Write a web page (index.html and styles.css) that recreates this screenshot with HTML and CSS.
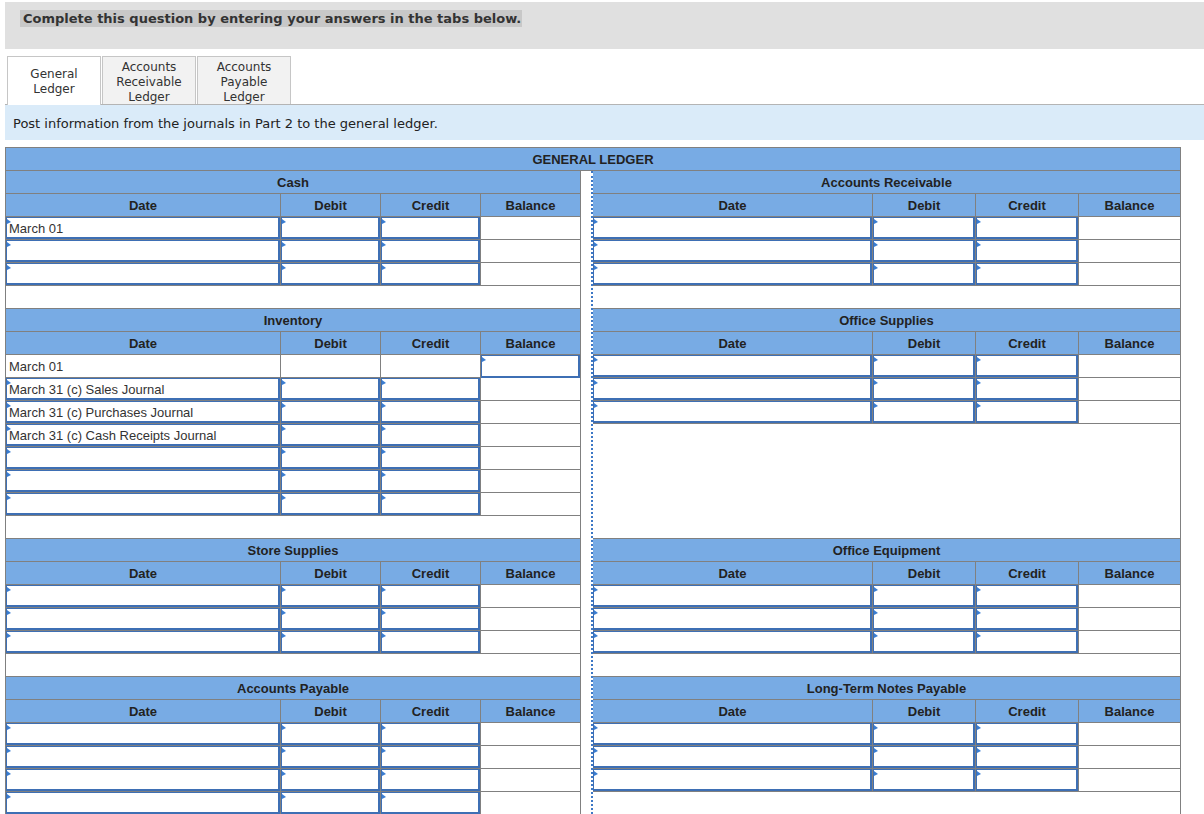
FILE: index.html
```html
<!DOCTYPE html>
<html>
<head>
<meta charset="utf-8">
<title>General Ledger</title>
<link rel="stylesheet" href="styles.css">
</head>
<body>
<div class="page">
  <div class="topbar"><span class="prompt">Complete this question by entering your answers in the tabs below.</span></div>
  <div class="tabs">
    <div class="tab active">General<br>Ledger</div>
    <div class="tab">Accounts<br>Receivable<br>Ledger</div>
    <div class="tab">Accounts<br>Payable<br>Ledger</div>
  </div>
  <div class="instr">Post information from the journals in Part 2 to the general ledger.</div>

  <div class="gl">
    <div class="gl-head">GENERAL LEDGER</div>
    <div class="gl-body">
      <div class="sep"></div>

      <!-- Cash -->
      <div class="block left r1">
        <div class="title">Cash</div>
        <div class="row hd"><div class="c">Date</div><div class="c">Debit</div><div class="c">Credit</div><div class="c">Balance</div></div>
        <div class="row"><div class="c"><div class="inp"><i class="flag"></i>March 01</div></div><div class="c"><div class="inp"><i class="flag"></i></div></div><div class="c"><div class="inp"><i class="flag"></i></div></div><div class="c"></div></div>
        <div class="row"><div class="c"><div class="inp"><i class="flag"></i></div></div><div class="c"><div class="inp"><i class="flag"></i></div></div><div class="c"><div class="inp"><i class="flag"></i></div></div><div class="c"></div></div>
        <div class="row"><div class="c"><div class="inp"><i class="flag"></i></div></div><div class="c"><div class="inp"><i class="flag"></i></div></div><div class="c"><div class="inp"><i class="flag"></i></div></div><div class="c"></div></div>
        <div class="spacer"></div>
      </div>

      <!-- Accounts Receivable -->
      <div class="block right r1">
        <div class="title">Accounts Receivable</div>
        <div class="row hd"><div class="c">Date</div><div class="c">Debit</div><div class="c">Credit</div><div class="c">Balance</div></div>
        <div class="row"><div class="c"><div class="inp"><i class="flag"></i></div></div><div class="c"><div class="inp"><i class="flag"></i></div></div><div class="c"><div class="inp"><i class="flag"></i></div></div><div class="c"></div></div>
        <div class="row"><div class="c"><div class="inp"><i class="flag"></i></div></div><div class="c"><div class="inp"><i class="flag"></i></div></div><div class="c"><div class="inp"><i class="flag"></i></div></div><div class="c"></div></div>
        <div class="row"><div class="c"><div class="inp"><i class="flag"></i></div></div><div class="c"><div class="inp"><i class="flag"></i></div></div><div class="c"><div class="inp"><i class="flag"></i></div></div><div class="c"></div></div>
        <div class="spacer"></div>
      </div>

      <!-- Inventory -->
      <div class="block left r2">
        <div class="title">Inventory</div>
        <div class="row hd"><div class="c">Date</div><div class="c">Debit</div><div class="c">Credit</div><div class="c">Balance</div></div>
        <div class="row"><div class="c txt">March 01</div><div class="c"></div><div class="c"></div><div class="c"><div class="inp"><i class="flag"></i></div></div></div>
        <div class="row"><div class="c"><div class="inp"><i class="flag"></i>March 31 (c) Sales Journal</div></div><div class="c"><div class="inp"><i class="flag"></i></div></div><div class="c"><div class="inp"><i class="flag"></i></div></div><div class="c"></div></div>
        <div class="row"><div class="c"><div class="inp"><i class="flag"></i>March 31 (c) Purchases Journal</div></div><div class="c"><div class="inp"><i class="flag"></i></div></div><div class="c"><div class="inp"><i class="flag"></i></div></div><div class="c"></div></div>
        <div class="row"><div class="c"><div class="inp"><i class="flag"></i>March 31 (c) Cash Receipts Journal</div></div><div class="c"><div class="inp"><i class="flag"></i></div></div><div class="c"><div class="inp"><i class="flag"></i></div></div><div class="c"></div></div>
        <div class="row"><div class="c"><div class="inp"><i class="flag"></i></div></div><div class="c"><div class="inp"><i class="flag"></i></div></div><div class="c"><div class="inp"><i class="flag"></i></div></div><div class="c"></div></div>
        <div class="row"><div class="c"><div class="inp"><i class="flag"></i></div></div><div class="c"><div class="inp"><i class="flag"></i></div></div><div class="c"><div class="inp"><i class="flag"></i></div></div><div class="c"></div></div>
        <div class="row"><div class="c"><div class="inp"><i class="flag"></i></div></div><div class="c"><div class="inp"><i class="flag"></i></div></div><div class="c"><div class="inp"><i class="flag"></i></div></div><div class="c"></div></div>
        <div class="spacer"></div>
      </div>

      <!-- Office Supplies -->
      <div class="block right r2">
        <div class="title">Office Supplies</div>
        <div class="row hd"><div class="c">Date</div><div class="c">Debit</div><div class="c">Credit</div><div class="c">Balance</div></div>
        <div class="row"><div class="c"><div class="inp"><i class="flag"></i></div></div><div class="c"><div class="inp"><i class="flag"></i></div></div><div class="c"><div class="inp"><i class="flag"></i></div></div><div class="c"></div></div>
        <div class="row"><div class="c"><div class="inp"><i class="flag"></i></div></div><div class="c"><div class="inp"><i class="flag"></i></div></div><div class="c"><div class="inp"><i class="flag"></i></div></div><div class="c"></div></div>
        <div class="row"><div class="c"><div class="inp"><i class="flag"></i></div></div><div class="c"><div class="inp"><i class="flag"></i></div></div><div class="c"><div class="inp"><i class="flag"></i></div></div><div class="c"></div></div>
        <div class="spacer"></div>
      </div>

      <!-- Store Supplies -->
      <div class="block left r3">
        <div class="title">Store Supplies</div>
        <div class="row hd"><div class="c">Date</div><div class="c">Debit</div><div class="c">Credit</div><div class="c">Balance</div></div>
        <div class="row"><div class="c"><div class="inp"><i class="flag"></i></div></div><div class="c"><div class="inp"><i class="flag"></i></div></div><div class="c"><div class="inp"><i class="flag"></i></div></div><div class="c"></div></div>
        <div class="row"><div class="c"><div class="inp"><i class="flag"></i></div></div><div class="c"><div class="inp"><i class="flag"></i></div></div><div class="c"><div class="inp"><i class="flag"></i></div></div><div class="c"></div></div>
        <div class="row"><div class="c"><div class="inp"><i class="flag"></i></div></div><div class="c"><div class="inp"><i class="flag"></i></div></div><div class="c"><div class="inp"><i class="flag"></i></div></div><div class="c"></div></div>
        <div class="spacer"></div>
      </div>

      <!-- Office Equipment -->
      <div class="block right r3">
        <div class="title">Office Equipment</div>
        <div class="row hd"><div class="c">Date</div><div class="c">Debit</div><div class="c">Credit</div><div class="c">Balance</div></div>
        <div class="row"><div class="c"><div class="inp"><i class="flag"></i></div></div><div class="c"><div class="inp"><i class="flag"></i></div></div><div class="c"><div class="inp"><i class="flag"></i></div></div><div class="c"></div></div>
        <div class="row"><div class="c"><div class="inp"><i class="flag"></i></div></div><div class="c"><div class="inp"><i class="flag"></i></div></div><div class="c"><div class="inp"><i class="flag"></i></div></div><div class="c"></div></div>
        <div class="row"><div class="c"><div class="inp"><i class="flag"></i></div></div><div class="c"><div class="inp"><i class="flag"></i></div></div><div class="c"><div class="inp"><i class="flag"></i></div></div><div class="c"></div></div>
        <div class="spacer"></div>
      </div>

      <!-- Accounts Payable -->
      <div class="block left r4">
        <div class="title">Accounts Payable</div>
        <div class="row hd"><div class="c">Date</div><div class="c">Debit</div><div class="c">Credit</div><div class="c">Balance</div></div>
        <div class="row"><div class="c"><div class="inp"><i class="flag"></i></div></div><div class="c"><div class="inp"><i class="flag"></i></div></div><div class="c"><div class="inp"><i class="flag"></i></div></div><div class="c"></div></div>
        <div class="row"><div class="c"><div class="inp"><i class="flag"></i></div></div><div class="c"><div class="inp"><i class="flag"></i></div></div><div class="c"><div class="inp"><i class="flag"></i></div></div><div class="c"></div></div>
        <div class="row"><div class="c"><div class="inp"><i class="flag"></i></div></div><div class="c"><div class="inp"><i class="flag"></i></div></div><div class="c"><div class="inp"><i class="flag"></i></div></div><div class="c"></div></div>
        <div class="row"><div class="c"><div class="inp"><i class="flag"></i></div></div><div class="c"><div class="inp"><i class="flag"></i></div></div><div class="c"><div class="inp"><i class="flag"></i></div></div><div class="c"></div></div>
        <div class="spacer"></div>
      </div>

      <!-- Long-Term Notes Payable -->
      <div class="block right r4">
        <div class="title">Long-Term Notes Payable</div>
        <div class="row hd"><div class="c">Date</div><div class="c">Debit</div><div class="c">Credit</div><div class="c">Balance</div></div>
        <div class="row"><div class="c"><div class="inp"><i class="flag"></i></div></div><div class="c"><div class="inp"><i class="flag"></i></div></div><div class="c"><div class="inp"><i class="flag"></i></div></div><div class="c"></div></div>
        <div class="row"><div class="c"><div class="inp"><i class="flag"></i></div></div><div class="c"><div class="inp"><i class="flag"></i></div></div><div class="c"><div class="inp"><i class="flag"></i></div></div><div class="c"></div></div>
        <div class="row"><div class="c"><div class="inp"><i class="flag"></i></div></div><div class="c"><div class="inp"><i class="flag"></i></div></div><div class="c"><div class="inp"><i class="flag"></i></div></div><div class="c"></div></div>
        <div class="spacer"></div>
      </div>
    </div>
  </div>
</div>
</body>
</html>
```

FILE: styles.css
```css
* { box-sizing: border-box; }

body {
  margin: 0;
  background: #ffffff;
  color: #333333;
}

.page {
  padding-top: 2px;
}

.topbar {
  margin-left: 5px;
  height: 47px;
  background: #e0e0e0;
  padding: 8px 0 0 15px;
  font-family: "DejaVu Sans", Verdana, sans-serif;
  font-size: 13px;
  font-weight: bold;
  line-height: 18px;
  color: #333333;
}

.prompt {
  background: #c8c8c8;
  padding: 1px 1px 1px 3px;
}

.tabs {
  display: flex;
  align-items: flex-start;
  gap: 1px;
  height: 48px;
  margin: 7px 0 0 7px;
}

.tab {
  width: 94px;
  height: 48px;
  display: flex;
  align-items: center;
  justify-content: center;
  text-align: center;
  padding-top: 3px;
  background: #f2f2f2;
  border: 1px solid #c6c6c6;
  border-bottom: none;
  font-family: "DejaVu Sans", Verdana, sans-serif;
  font-size: 12px;
  line-height: 15px;
  color: #333333;
}

.tab.active {
  background: #ffffff;
  height: 49px;
  padding-top: 1px;
  position: relative;
  z-index: 1;
}

.instr {
  margin-left: 5px;
  height: 36px;
  background: #daebf9;
  border-top: 1px solid #b4b4b4;
  padding-left: 8px;
  padding-top: 1px;
  display: flex;
  align-items: center;
  font-family: "DejaVu Sans", Verdana, sans-serif;
  font-size: 13px;
  color: #222222;
}

.gl {
  margin: 7px 0 0 5px;
  width: 1176px;
  font-family: "Liberation Sans", Arial, sans-serif;
  font-size: 13px;
  color: #333333;
}

.gl-head {
  height: 24px;
  border: 1px solid #808080;
  background: #78abe4;
  text-align: center;
  font-weight: bold;
  line-height: 23px;
  color: #222222;
}

.gl-body {
  display: grid;
  grid-template-columns: 576px 10px 2px 588px;
}

.sep {
  grid-column: 3;
  grid-row: 1 / 5;
  border-left: 2px dotted #3d78c6;
}

.r1 { grid-row: 1; }
.r2 { grid-row: 2; }
.r3 { grid-row: 3; }
.r4 { grid-row: 4; }

.block {
  display: flex;
  flex-direction: column;
  border-right: 1px solid #808080;
}

.block.left {
  grid-column: 1;
  border-left: 1px solid #808080;
}

.block.right {
  grid-column: 4;
}

.title {
  height: 23px;
  background: #78abe4;
  border-bottom: 1px solid #808080;
  text-align: center;
  font-weight: bold;
  line-height: 23px;
  color: #222222;
}

.row {
  display: grid;
  height: 23px;
  border-bottom: 1px solid #808080;
}

.left .row {
  grid-template-columns: 275px 100px 100px 99px;
}

.right .row {
  grid-template-columns: 280px 103px 103px 101px;
}

.c {
  border-right: 1px solid #808080;
  min-width: 0;
}

.c:last-child {
  border-right: none;
}

.row.hd {
  background: #78abe4;
}

.row.hd .c {
  text-align: center;
  font-weight: bold;
  line-height: 23px;
  color: #222222;
}

.c.txt {
  padding-left: 3px;
  line-height: 23px;
  white-space: nowrap;
}

.inp {
  position: relative;
  height: 100%;
  border: 1px solid #3e6fb4;
  border-right-width: 2px;
  border-bottom-width: 2px;
  padding-left: 2px;
  padding-top: 1px;
  display: flex;
  align-items: center;
  white-space: nowrap;
  background: #ffffff;
}

.flag {
  position: absolute;
  left: 0;
  top: 1px;
  width: 0;
  height: 0;
  border-left: 4px solid #3a7dd1;
  border-top: 3px solid transparent;
  border-bottom: 2px solid transparent;
}

.spacer {
  flex: 1;
  min-height: 23px;
  border-bottom: 1px solid #808080;
}
```
